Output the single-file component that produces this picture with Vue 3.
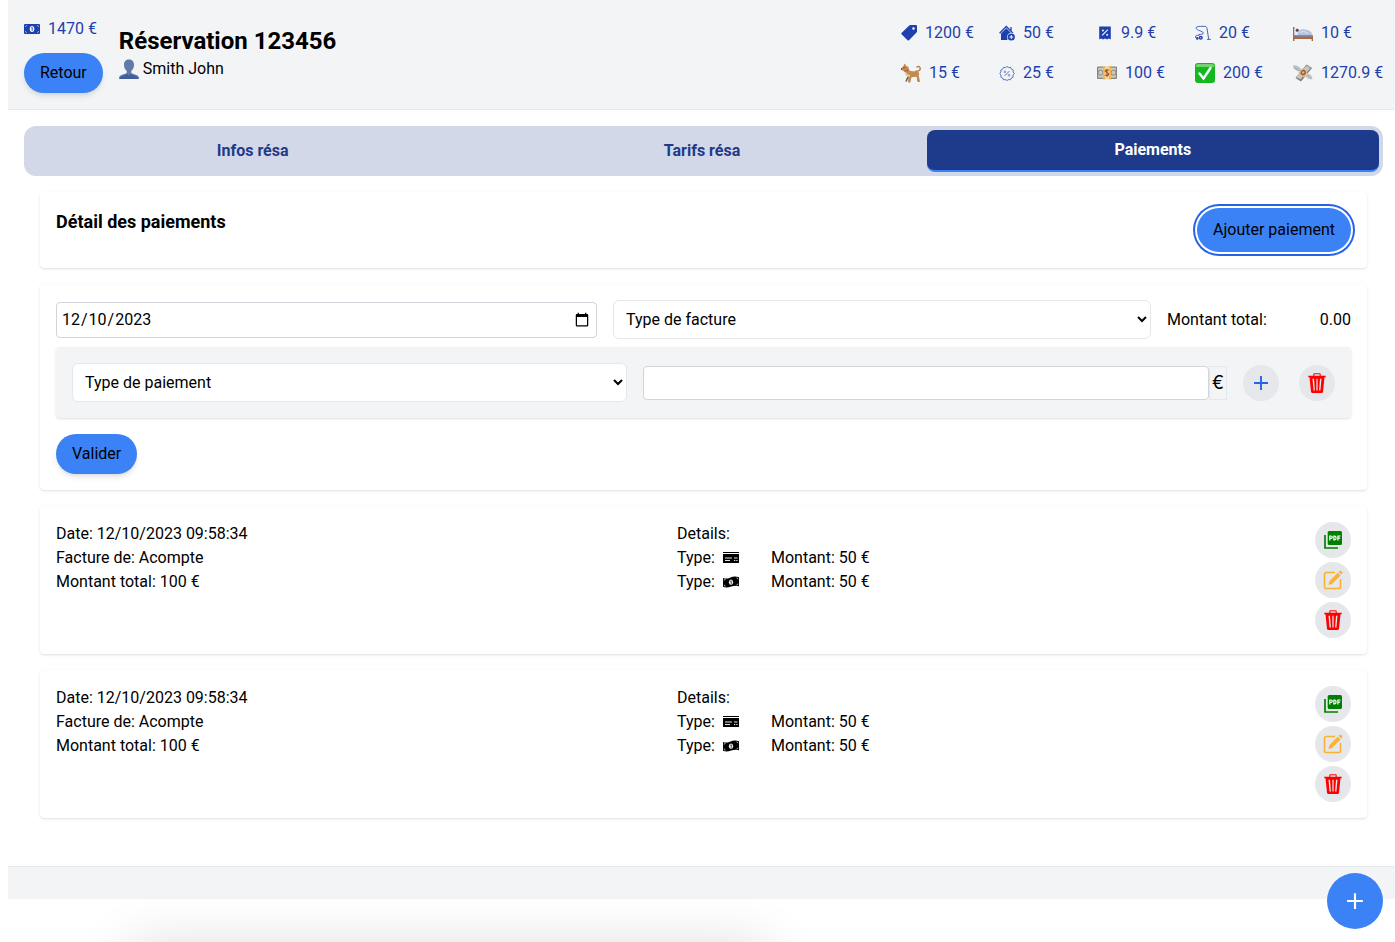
<script setup>
import { ref } from 'vue'

const stats = [
  { icon: 'tag', size: 16, value: '1200 €' },
  { icon: 'house', size: 16, value: '50 €' },
  { icon: 'receipt', size: 16, value: '9.9 €' },
  { icon: 'vacuum', size: 16, value: '20 €' },
  { icon: 'bed', size: 20, value: '10 €' },
  { icon: 'dog', size: 20, value: '15 €' },
  { icon: 'badge', size: 16, value: '25 €' },
  { icon: 'banknote', size: 20, value: '100 €' },
  { icon: 'check', size: 20, value: '200 €' },
  { icon: 'wings', size: 20, value: '1270.9 €' }
]
const tabs = ['Infos résa', 'Tarifs résa', 'Paiements']
const activeTab = ref('Paiements')
const date = ref('2023-12-10')
const invoiceType = ref('')
const paymentType = ref('')
const amount = ref('')
const payments = [1, 2].map((id) => ({
  id,
  date: '12/10/2023 09:58:34',
  kind: 'Acompte',
  total: 100,
  lines: [
    { icon: 'card', amount: 50 },
    { icon: 'cash', amount: 50 }
  ]
}))
</script>

<template>
  <svg class="defs" aria-hidden="true">
    <symbol id="money" viewBox="0 0 16 16">
      <rect y="3" width="16" height="10" rx="1" fill="currentColor" />
      <ellipse cx="8" cy="8" rx="2.3" ry="2.9" fill="#f3f4f6" />
      <path d="M7.400 6.800 8.200 6.300V9.700" fill="none" stroke="currentColor" stroke-width=".9" />
      <path d="M1 5.600A1.600 1.600 0 0 0 2.600 4M13.400 4A1.600 1.600 0 0 0 15 5.600M15 10.400A1.600 1.600 0 0 0 13.400 12M2.600 12A1.600 1.600 0 0 0 1 10.400" fill="none" stroke="#f3f4f6" stroke-width=".5" />
    </symbol>
    <symbol id="user" viewBox="0 0 20 20">
      <path d="M10 .5c3 0 5 2 5 5.300 0 2.700-1 4.700-2.700 6v2c.5 1.500 6.900 1.600 7.500 4.300L20 20H0l.2-1.900c.6-2.700 7-2.800 7.500-4.300v-2C6 10.500 5 8.500 5 5.800 5 2.500 7 .5 10 .5Z" fill="#627aa8" />
      <path d="M1 19c1-2.500 5-2.300 7-4l2 1.400 2-1.400c2 1.700 6 1.500 7 4v1H1Z" fill="#3f5f9b" />
    </symbol>
    <symbol id="tag" viewBox="0 0 16 16">
      <path fill="currentColor" fill-rule="evenodd" d="M9.500 0H15q1 0 1 1V7L8 15.300q-.7.6-1.400 0L.5 9.300q-.6-.7 0-1.400L8 .7Q8.600 0 9.500 0ZM12.500 2.200a1.300 1.300 0 1 0 0 2.600 1.300 1.300 0 0 0 0-2.600Z" />
    </symbol>
    <symbol id="house" viewBox="0 0 16 16">
      <path d="M.6 8.200 7.300 1.500 14 8.200M12 2v4" fill="none" stroke="currentColor" stroke-width="1.300" />
      <path d="M7.300 3.300 12.700 8.700 8 15H2V8.600Z" fill="currentColor" />
      <circle cx="12.300" cy="12" r="4.200" fill="#f3f4f6" />
      <circle cx="12.300" cy="12" r="3.600" fill="currentColor" />
      <path d="M10.300 12h4M12.300 10v4" stroke="#f3f4f6" stroke-width="1" />
    </symbol>
    <symbol id="receipt" viewBox="0 0 16 16">
      <path d="M2.200 1.500h11.600v13l-1.900-1-1.900 1-2-1-2 1-1.900-1-1.900 1Z" fill="currentColor" />
      <path d="m5.200 10.300 5.600-5.600" stroke="#f3f4f6" stroke-width="1.200" />
      <circle cx="5.900" cy="5.500" r="1" fill="#f3f4f6" />
      <circle cx="10.200" cy="9.800" r="1" fill="#f3f4f6" />
    </symbol>
    <symbol id="vacuum" viewBox="0 0 16 16">
      <g fill="none" stroke="currentColor" stroke-width=".8">
        <path d="M3.500 9.500C9.500 9.500 9.500 7.500 6 6.200 2 4.800.7 4 1.200 2.500 1.700 1.200 5 1.500 8 1.300c3-.2 3.700.5 4 2l1.700 10.900M12 14.400h3.800" />
        <path d="M.7 13v-2c1-1 3-.8 4 .2" />
      </g>
      <circle cx="2.300" cy="13.400" r="1.300" fill="currentColor" />
      <circle cx="5.800" cy="12.800" r="2" fill="currentColor" />
      <circle cx="5.800" cy="12.800" r=".6" fill="#fff" />
    </symbol>
    <symbol id="bed" viewBox="0 0 20 20">
      <path d="M0 4h1.500v8.500H20V18h-1.400v-2H1.500v2H0Z" fill="#a56b42" />
      <path d="M1.500 5.500c1-1.500 3.500-1.200 3.800.7v5.500H1.500Z" fill="#dfe6f4" />
      <circle cx="4.300" cy="7.300" r="1.500" fill="#594237" />
      <path d="M5.200 9.500C6 5.500 9 6 12 6.500c4 .8 6.500 1.500 7.500 5.500v1H4.500Z" fill="#b4c5e3" />
      <path d="M1.500 12h18v1.500h-18Z" fill="#6f93c9" />
      <path d="M7 9.500c3-1.700 6-.6 8 1" fill="none" stroke="#e0e8f5" stroke-width="1" />
    </symbol>
    <symbol id="dog" viewBox="0 0 20 20">
      <path d="m7 14-2 4.500M8.500 14v5.300M16.500 13l.8 5.500" fill="none" stroke="#62605c" stroke-width="1.600" />
      <path d="M14.500 8c4 .7 5.500-1.500 4.300-3.700-1-1.500-3-1-3 .4" fill="none" stroke="#b37e48" stroke-width="1.400" />
      <path d="m3.500.5 1.800 2.300L7.500 4l.7 3.500c2 1 4.600.7 7.300.5 2.500.3 3.200 2.600 2.200 4.500l1.200 5.500v1h-1.700l-1.800-5.200-4.900.4-1.400 5H6.900l1-5C5.800 13 4 11.500 3.700 8.500L0 6.800l.2-1.500 2-1.700Z" fill="#c38b50" />
      <path d="M4.700 8.500c1 2 2.500 3.500 4.700 3.500l-1.300 2C5.500 13 4 11 3.800 8.400Z" fill="#e8c895" />
      <path d="M3.500 8.300 7.600 7" stroke="#bd4638" stroke-width="1" />
      <circle cx="3" cy="4.700" r=".6" fill="#3b2a21" />
      <circle cx=".5" cy="6" r=".7" fill="#3b2a21" />
    </symbol>
    <symbol id="badge" viewBox="0 0 16 16">
      <path d="m8 1.500 1.700 1.100 2-.2.8 1.800 1.800.9-.2 2L15.200 8.500 14 10.200l.1 2-1.800.8-.9 1.800-2-.2L8 15.500l-1.500-.9-2 .2-.9-1.800-1.800-.9.200-2L.8 8.500l1.100-1.600-.1-1.900 1.800-.8.900-1.800 2 .2Z" fill="none" stroke="currentColor" stroke-width=".7" />
      <path d="m5.600 10.900 4.800-4.800" stroke="currentColor" stroke-width=".7" />
      <circle cx="5.900" cy="6.800" r=".9" fill="none" stroke="currentColor" stroke-width=".5" />
      <circle cx="10.100" cy="10.300" r=".9" fill="none" stroke="currentColor" stroke-width=".5" />
    </symbol>
    <symbol id="banknote" viewBox="0 0 20 20">
      <rect y="3.500" width="20" height="12.500" rx="1" fill="#85857c" />
      <rect x="1.200" y="4.700" width="17.600" height="10" fill="#c9c9bd" />
      <circle cx="3.500" cy="9.700" r="2.500" fill="none" stroke="#8b8b82" />
      <circle cx="16.500" cy="9.700" r="2.500" fill="none" stroke="#8b8b82" />
      <path d="M6 3h1.800v13.500H6ZM12.200 3H14v13.500h-1.800Z" fill="#f2b44b" />
      <path d="M7.800 3h4.400v13.500H7.800Z" fill="#ecd6a2" />
      <path d="M11.800 7.500c-1-1.300-3.500-1-3.500.6 0 1.700 3.400 1.300 3.400 3.100 0 1.700-2.700 1.900-3.700.5M10 6v7.700" fill="none" stroke="#a34d28" stroke-width="1.100" />
    </symbol>
    <symbol id="check" viewBox="0 0 20 20">
      <rect width="20" height="20" rx="3" fill="#13b81e" />
      <path d="M3 1h14q2 0 2 2v1H1V3q0-2 2-2Z" fill="#75d36f" />
      <path d="m4.500 10.500 4 5L15.500 5" fill="none" stroke="#fff" stroke-width="2.400" stroke-linecap="round" />
    </symbol>
    <symbol id="wings" viewBox="0 0 20 20">
      <path d="m2.500 15 11-13.500L19 5 8 18.500Z" fill="#7f7f79" />
      <path d="m3 14 10.500-11.500L17.500 5 7.500 16.500Z" fill="#c6c6be" />
      <path d="m5.500 9.500 4-4 5.500 5-4 4Z" fill="#efb568" />
      <circle cx="10.200" cy="9.500" r="2" fill="none" stroke="#9e5432" stroke-width="1.300" />
      <path d="M8 8.500C4 8.500 0 6.500 0 2.500c3-.8 6.500.7 9 4ZM12.500 11c3.500-1 6.500.5 7 4.700-2.500 1.300-5 .3-7.500-2.500Z" fill="#c3c9ca" />
      <path d="m1 3.500 6 3.700M14 12l4.500 3.300M1.500 5.500 6.500 8" stroke="#939c9f" stroke-width=".6" />
    </symbol>
    <symbol id="plus" viewBox="0 0 16 16">
      <path d="M8 1v14M1 8h14" stroke="currentColor" stroke-width="1.900" />
    </symbol>
    <symbol id="trash" viewBox="0 0 20 20">
      <path d="M6.800 3V1.500Q6.800.7 7.600.7h4.800q.8 0 .8.800V3" fill="none" stroke="currentColor" stroke-width="1.100" />
      <path fill="currentColor" fill-rule="evenodd" d="M1.300 2.700h17.400v1.500h-1.200L16 18.700q-.2 1.300-1.500 1.300h-9Q4.200 20 4 18.700L2.500 4.200H1.300ZM5.500 5.700 6.600 17.500h1.300L7 5.700ZM9.400 5.700v11.800h1.200V5.700ZM13 5.700l-.9 11.800h1.300l1.100-11.800Z" />
    </symbol>
    <symbol id="pdf" viewBox="0 0 20 20">
      <path d="M2 5v13h13" fill="none" stroke="currentColor" stroke-width="1.700" />
      <rect x="4.700" y="1" width="14.300" height="14" rx="1.500" fill="currentColor" />
      <path d="M6.800 10.500V6h1.100q1.400 0 1.400 1.200t-1.400 1.200H6.800M10.900 6v3.900h.6q1.500 0 1.500-1.400V7.400Q13 6 11.500 6ZM14.900 10.500V6h2.600M14.900 8.200h2.200" fill="none" stroke="#fff" stroke-width="1.200" />
    </symbol>
    <symbol id="edit" viewBox="0 0 20 20">
      <path d="M12 2.500H3.200Q1.500 2.500 1.500 4.200v12.600q0 1.700 1.700 1.700h12.600q1.700 0 1.700-1.700V9" fill="none" stroke="currentColor" stroke-width="1.600" />
      <path d="m5.500 15 .9-3.800 8.300-8.400 2.800 2.700-8.400 8.400ZM15.500 2l.9-.9q1-.8 1.900 0l.7.7q.9.900 0 1.900l-.8.800Z" fill="currentColor" />
    </symbol>
    <symbol id="card" viewBox="0 0 16 16">
      <path d="M0 2h16v1H0ZM0 4h16v9H0Z" fill="currentColor" />
      <path d="M2 8h7M2 10.500h5M11 8h3.500M11 10.500h1.300M13.200 10.500h1.300" stroke="#fff" stroke-width=".9" />
    </symbol>
    <symbol id="cash" viewBox="0 0 16 16">
      <path d="M0 4c2.500 1 4.500.7 7-.3 3-1.100 5.500-1.600 9-.4v9c-3-1-5-.5-7.800.3C5 13.700 2.800 13.800 0 12.800Z" fill="currentColor" />
      <ellipse cx="8" cy="8.200" rx="2.100" ry="2.600" fill="#fff" />
      <path d="m7.400 7.200.8-.5v3.200" fill="none" stroke="currentColor" stroke-width=".8" />
      <path d="M.8 6.300Q2 6.400 2.200 5M15.200 10Q14 10 13.800 11.300M.8 11Q2 11 2.200 12.500M13.800 3.600Q14 4.800 15.200 5" fill="none" stroke="#fff" stroke-width=".7" />
    </symbol>
  </svg>

  <div class="page">
    <header class="header">
      <div class="back">
        <span class="figure"><svg class="i16"><use href="#money" /></svg>1470 €</span>
        <button class="pill" type="button">Retour</button>
      </div>
      <div class="heading">
        <h1>Réservation 123456</h1>
        <p class="client"><svg class="i20"><use href="#user" /></svg>Smith John</p>
      </div>
      <ul class="stats">
        <li v-for="s in stats" :key="s.icon" class="figure">
          <svg :class="'i' + s.size"><use :href="'#' + s.icon" /></svg>{{ s.value }}
        </li>
      </ul>
    </header>

    <main class="content">
      <nav class="tabs">
        <button
          v-for="t in tabs"
          :key="t"
          type="button"
          class="tab"
          :class="{ active: t === activeTab }"
          @click="activeTab = t"
        >{{ t }}</button>
      </nav>

      <div class="cards">
        <section class="card title-card">
          <h2>Détail des paiements</h2>
          <button class="pill ringed" type="button">Ajouter paiement</button>
        </section>

        <form class="card" @submit.prevent>
          <div class="invoice-row">
            <input v-model="date" class="field date" type="date" aria-label="Date" />
            <select v-model="invoiceType" class="select" aria-label="Type de facture">
              <option value="">Type de facture</option>
              <option>Acompte</option>
            </select>
            <p class="total"><span>Montant total:</span><span>0.00</span></p>
          </div>
          <div class="payment-row">
            <select v-model="paymentType" class="select" aria-label="Type de paiement">
              <option value="">Type de paiement</option>
            </select>
            <div class="amount">
              <input v-model="amount" class="field" type="text" aria-label="Montant" />
              <span class="unit">€</span>
            </div>
            <div class="row-actions">
              <button class="round blue" type="button" aria-label="Ajouter"><svg class="i16"><use href="#plus" /></svg></button>
              <button class="round red" type="button" aria-label="Supprimer"><svg class="i20"><use href="#trash" /></svg></button>
            </div>
          </div>
          <button class="pill" type="submit">Valider</button>
        </form>

        <article v-for="p in payments" :key="p.id" class="card payment">
          <div>
            <p>Date: {{ p.date }}</p>
            <p>Facture de: {{ p.kind }}</p>
            <p>Montant total: {{ p.total }} €</p>
          </div>
          <div>
            <p>Details:</p>
            <p v-for="l in p.lines" :key="l.icon" class="line">
              <span class="kind">Type:<svg class="i16"><use :href="'#' + l.icon" /></svg></span>
              <span>Montant: {{ l.amount }} €</span>
            </p>
          </div>
          <div class="actions">
            <button class="round green" type="button" aria-label="PDF"><svg class="i20"><use href="#pdf" /></svg></button>
            <button class="round orange" type="button" aria-label="Modifier"><svg class="i20"><use href="#edit" /></svg></button>
            <button class="round red" type="button" aria-label="Supprimer"><svg class="i20"><use href="#trash" /></svg></button>
          </div>
        </article>
      </div>
    </main>

    <footer class="footer"></footer>
    <button class="fab" type="button" aria-label="Nouveau"><svg class="i18"><use href="#plus" /></svg></button>
    <div class="sheet" aria-hidden="true"></div>
  </div>
</template>

<style>
body {
  margin: 0;
  background: #fff;
}
</style>

<style scoped>
*,
*::before,
*::after {
  box-sizing: border-box;
}
.defs {
  position: absolute;
  width: 0;
  height: 0;
}
.page {
  margin-left: 8px;
  font-family: Roboto, "Liberation Sans", sans-serif;
  font-size: 16px;
  line-height: 24px;
  color: #000;
}
h1,
h2,
p,
ul {
  margin: 0;
  padding: 0;
}
button,
input,
select {
  font: inherit;
  color: inherit;
  margin: 0;
}
svg {
  flex: none;
  display: block;
}
.i16 {
  width: 16px;
  height: 16px;
}
.i18 {
  width: 18px;
  height: 18px;
}
.i20 {
  width: 20px;
  height: 20px;
}
.header {
  display: flex;
  padding: 17px 12px 16px 16px;
  background: #f3f4f6;
  border-bottom: 1px solid #e5e7eb;
}
.back {
  display: flex;
  flex-direction: column;
  align-items: flex-start;
  gap: 12px;
}
.figure {
  display: flex;
  align-items: center;
  gap: 8px;
  color: #1e40af;
  white-space: nowrap;
}
.heading {
  margin: 8px auto 0 16px;
}
h1 {
  font-size: 24px;
  line-height: 32px;
  font-weight: 700;
}
.client {
  display: flex;
  align-items: center;
  gap: 4px;
}
.stats {
  display: grid;
  grid-template-columns: repeat(5, 90px);
  grid-auto-rows: 32px;
  gap: 8px;
  align-content: start;
  list-style: none;
}
.pill {
  padding: 8px 16px;
  border: 0;
  border-radius: 999px;
  background: #3b82f6;
  box-shadow: 0 4px 6px -1px rgba(0, 0, 0, 0.1), 0 2px 4px -2px rgba(0, 0, 0, 0.1);
  white-space: nowrap;
}
.ringed {
  padding: 10px 16px;
  box-shadow: 0 0 0 2px #fff, 0 0 0 4px #2563eb;
}
.content {
  padding: 16px 12px 48px 16px;
}
.tabs {
  display: grid;
  grid-template-columns: 449fr 449fr 452fr;
  padding: 4px;
  border-radius: 12px;
  background: #d2d8e8;
}
.tab {
  height: 42px;
  padding: 0;
  border: 0;
  border-radius: 8px;
  background: none;
  font-weight: 700;
  color: #1e3a8a;
}
.tab.active {
  border-bottom: 2px solid #3b82f6;
  background: #1e3a8a;
  color: #fff;
}
.cards {
  display: flex;
  flex-direction: column;
  gap: 16px;
  padding: 16px 16px 0;
}
.card {
  padding: 16px;
  border-radius: 4px;
  background: #fff;
  box-shadow: 0 1px 3px rgba(0, 0, 0, 0.1), 0 1px 2px -1px rgba(0, 0, 0, 0.1);
}
.title-card {
  display: flex;
  justify-content: space-between;
  align-items: flex-start;
}
h2 {
  font-size: 18px;
  line-height: 28px;
  font-weight: 700;
}
.invoice-row {
  display: grid;
  grid-template-columns: 541fr 538fr 184px;
  gap: 16px;
  align-items: center;
}
.field {
  min-width: 0;
  width: 100%;
  height: 34px;
  padding: 0 4px;
  border: 1px solid #d1d5db;
  border-radius: 4px;
  background: #fff;
}
.date {
  height: 36px;
}
.select {
  min-width: 0;
  height: 39px;
  padding: 0 8px;
  border: 1px solid #e5e7eb;
  border-radius: 6px;
  background: #fff;
}
.total {
  display: flex;
  justify-content: space-between;
}
.payment-row {
  display: grid;
  grid-template-columns: 555fr 584fr auto;
  align-items: center;
  gap: 16px;
  margin: 8px 0 16px;
  padding: 16px;
  border-radius: 4px;
  background: #f3f4f6;
  box-shadow: 0 1px 3px rgba(0, 0, 0, 0.1), 0 1px 2px -1px rgba(0, 0, 0, 0.1);
}
.amount {
  display: flex;
}
.unit {
  display: flex;
  align-items: center;
  justify-content: center;
  flex: none;
  width: 18px;
  height: 34px;
  border: 1px solid #e5e7eb;
  font-family: Inter, sans-serif;
  font-size: 18px;
}
.row-actions {
  display: flex;
  gap: 20px;
}
.round {
  display: flex;
  align-items: center;
  justify-content: center;
  width: 36px;
  height: 36px;
  padding: 0;
  border: 0;
  border-radius: 50%;
  background: #e5e7eb;
}
.blue {
  color: #2563eb;
}
.red {
  color: #f00;
}
.green {
  color: #008000;
}
.orange {
  color: #f9b233;
}
.payment {
  display: grid;
  grid-template-columns: 1fr 1fr 53px;
}
.line {
  display: flex;
}
.kind {
  display: flex;
  align-items: center;
  gap: 8px;
  width: 94px;
}
.actions {
  display: flex;
  flex-direction: column;
  align-items: flex-end;
  gap: 4px;
}
.footer {
  height: 33px;
  border-top: 1px solid #e5e7eb;
  background: #f3f4f6;
}
.fab {
  position: fixed;
  right: 12px;
  bottom: 13px;
  display: flex;
  align-items: center;
  justify-content: center;
  width: 56px;
  height: 56px;
  padding: 0;
  border: 0;
  border-radius: 50%;
  background: #3b82f6;
  color: #fff;
}
.sheet {
  position: fixed;
  top: 100%;
  left: 128px;
  width: 640px;
  height: 80px;
  box-shadow: 0 4px 56px rgba(0, 0, 0, 0.14);
}
</style>
